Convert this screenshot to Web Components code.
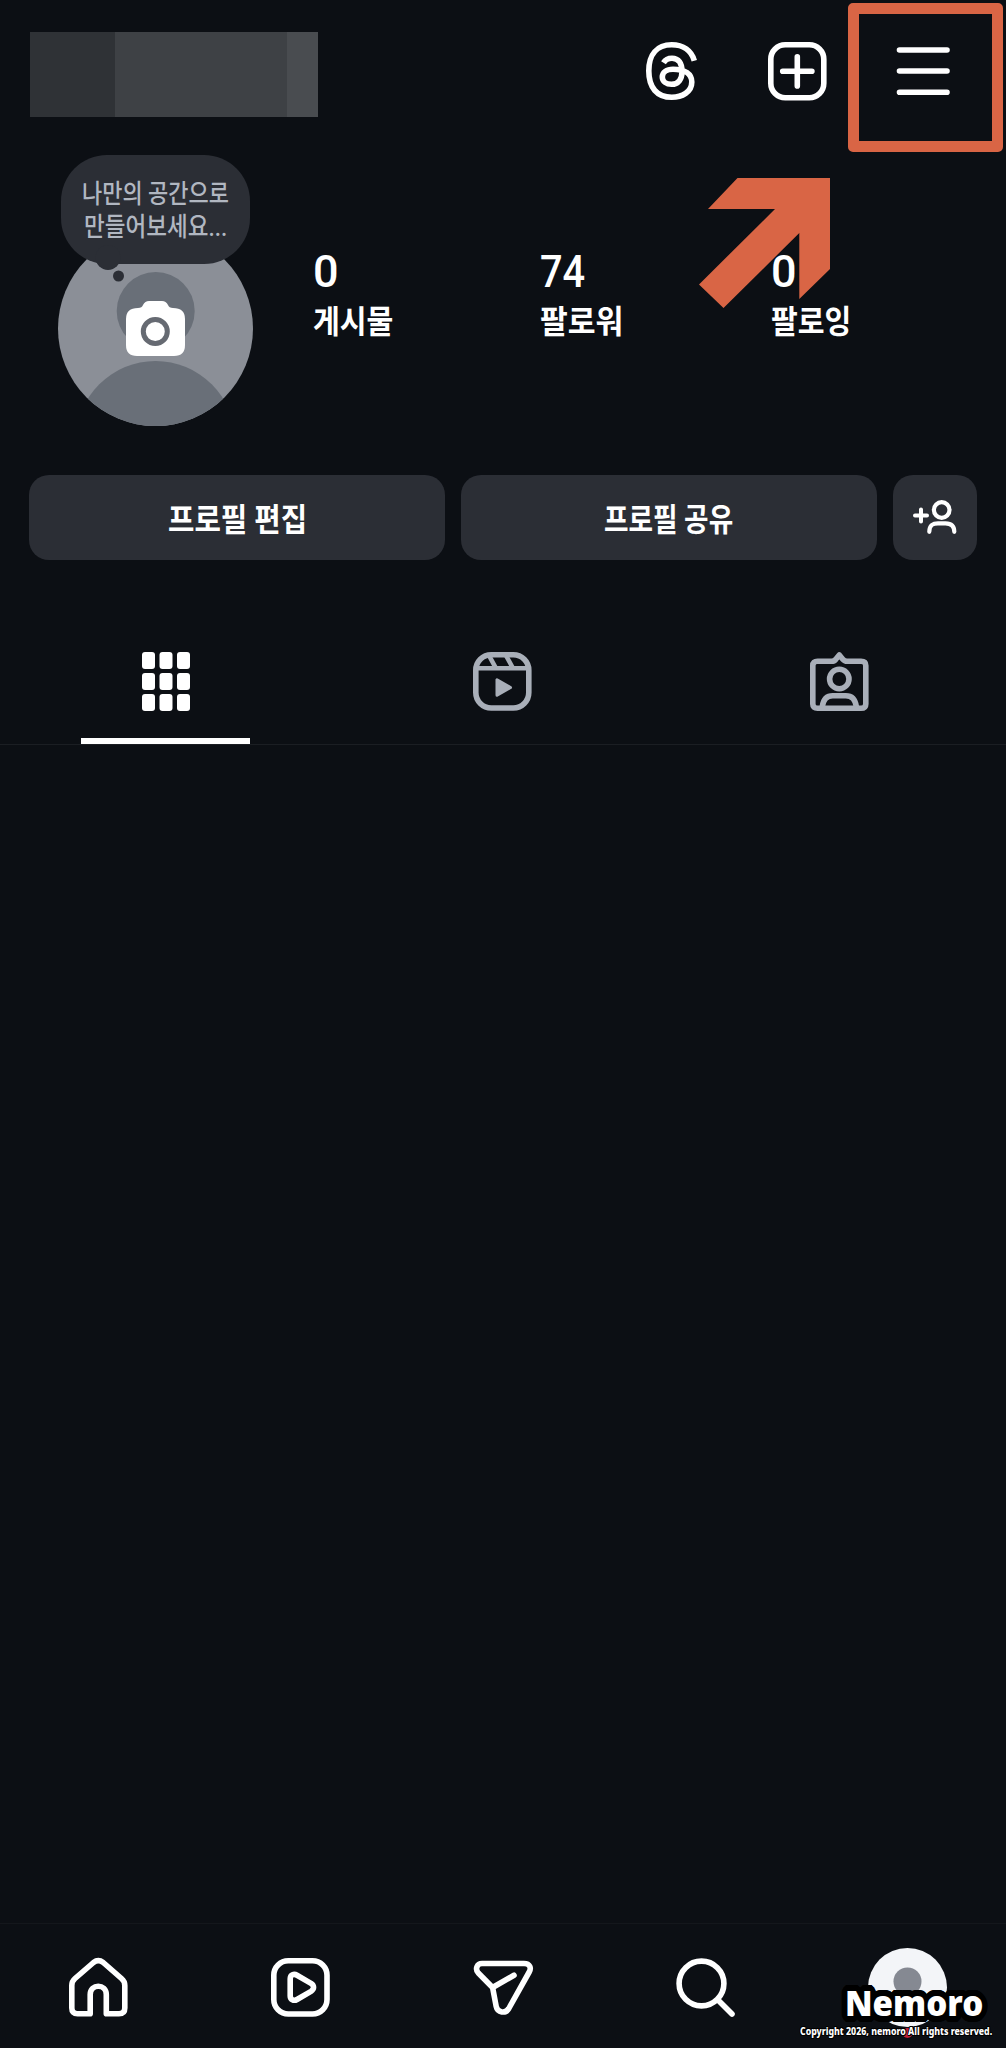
<!DOCTYPE html>
<html lang="ko">
<head>
<meta charset="utf-8">
<title>Profile</title>
<style>
  body {
    margin: 0;
    background: #0c0f14;
    color: #fff;
    font-family: Roboto, "Noto Sans CJK KR", sans-serif;
  }
</style>
</head>
<body>
<profile-page></profile-page>

<script>
const ICONS = {
  threads: `<path stroke-linecap="butt" d="M52.3 18.7C49.5 9 41.5 2.8 29.7 2.8C15 2.8 6.8 12.5 6.8 29S15 55.3 29.7 55.3C40 55.3 49.8 50 49.8 40C49.8 32 43 27.2 31 27.2C24.5 27.2 20.3 30.5 20.3 35S24.5 42.3 29.5 42.3C36.5 42.3 40 37 40 29.5C40 21 36.5 16.3 30 16.3C26 16.3 23.3 17.8 21.5 20.8"/>`,
  create: `<rect x="2.8" y="2.8" width="53" height="53" rx="14.5"/><path d="M29.3 14.7v29.2M14.7 29.3h29.2"/>`,
  menu: `<path d="M5.5 8h47.5M5.5 29h47.5M5.5 50.2h47.5"/>`,
  grid: `<g fill="currentColor" stroke="none"><rect x="6" y="0" width="13" height="17" rx="3"/><rect x="23.5" y="0" width="13" height="17" rx="3"/><rect x="41" y="0" width="13" height="17" rx="3"/><rect x="6" y="21" width="13" height="17" rx="3"/><rect x="23.5" y="21" width="13" height="17" rx="3"/><rect x="41" y="21" width="13" height="17" rx="3"/><rect x="6" y="42" width="13" height="17" rx="3"/><rect x="23.5" y="42" width="13" height="17" rx="3"/><rect x="41" y="42" width="13" height="17" rx="3"/></g>`,
  clips: `<rect x="2.8" y="2.8" width="53" height="53.2" rx="15.5"/><path stroke-width="4.6" stroke-linecap="butt" d="M3 16.3h53M16 3.5l7 12.8M33 3.5l7 12.8"/><path fill="currentColor" stroke-width="3" d="M24 27.8v15.5l13.5-7.8z"/>`,
  tagged: `<path d="M7.5 9.3H21.5Q24.2 9.3 25.8 7.2L29.3 3L32.8 7.2Q34.5 9.3 37.2 9.3H51Q55.8 9.3 55.8 13.5V52Q55.8 56.3 51 56.3H7.5Q2.8 56.3 2.8 52V13.5Q2.8 9.3 7.5 9.3Z"/><circle cx="29.3" cy="27" r="9.7"/><path stroke-linecap="butt" d="M12.3 54.5C13.3 47 16.8 43.7 22.8 43.7H35.8C41.8 43.7 45.3 47 46.3 54.5"/>`,
  home: `<path d="M2.8 27.5Q2.8 23.3 6 20.5L24.5 4.5Q29.3 .9 34.2 4.5L52.5 20.5Q55.8 23.3 55.8 27.5V50Q55.8 55.8 50 55.8H37.3V36.5C37.3 25.4 21.2 25.4 21.2 36.5V55.8H8.5Q2.8 55.8 2.8 50Z"/>`,
  reels: `<rect x="2.8" y="2.8" width="53.2" height="53.2" rx="14.5"/><path d="M19.2 21C19.2 16.6 23 15.5 26 17.2L40 25.3C43.4 27.5 43.4 31.2 40 33.3L26 41.5C22.7 43.4 19.2 41.5 19.2 38Z"/>`,
  send: `<path d="M8 5.5H50C56 5.5 57.5 10 55.2 14L34.8 50.5C31.5 56 23.5 54.8 22.2 48.5L18.6 29.5L4.3 15C.8 11 3 5.5 8 5.5ZM18.6 29.5L40 17.3"/>`,
  search: `<circle cx="25.5" cy="25.5" r="22.4"/><path d="M42 42L56 56"/>`,
  addUser: `<path stroke-width="4" d="M12 14.5v12M6 20.5h12"/><circle cx="32.7" cy="15" r="7.8" stroke-width="4.2"/><path stroke-width="4.2" d="M20.3 36.8C20.3 30 24 28.3 29 28.3H36.5C41.5 28.3 45.3 30.5 45.3 36.8"/>`
};

class UiIcon extends HTMLElement {
  constructor() {
    super();
    this.attachShadow({ mode: "open" });
  }

  connectedCallback() {
    this.shadowRoot.innerHTML = `
      <style>
        :host {
          display: block;
          width: 59px;
          height: 59px;
          flex: none;
        }

        svg {
          display: block;
          overflow: visible;
          fill: none;
          stroke: currentColor;
          stroke-linecap: round;
          stroke-linejoin: round;
        }
      </style>
      <svg width="59" height="59" viewBox="0 0 59 59" stroke-width="5.6">${ICONS[this.getAttribute("name")]}</svg>
    `;
  }
}

// one line of text squeezed or stretched to the given width
class FitText extends HTMLElement {
  constructor() {
    super();
    this.attachShadow({ mode: "open" });
    this.shadowRoot.innerHTML = `
      <style>
        :host {
          display: block;
          white-space: nowrap;
        }

        span {
          display: inline-block;
          transform-origin: left center;
        }
      </style>
      <span><slot></slot></span>
    `;
  }

  connectedCallback() {
    const width = Number(this.getAttribute("width"));
    const span = this.shadowRoot.querySelector("span");
    this.style.width = width + "px";
    span.style.transform = `scaleX(${width / span.offsetWidth})`;
  }
}

class TopBar extends HTMLElement {
  constructor() {
    super();
    this.attachShadow({ mode: "open" });
    this.shadowRoot.innerHTML = `
      <style>
        :host {
          display: flex;
          align-items: center;
          box-sizing: border-box;
          height: 155px;
          padding: 0 53px 13px 30px;
        }

        .name {
          width: 288px;
          height: 85px;
          margin: 7px auto 0 0;
          background: linear-gradient(to right, #2f3236 85px, #3e4145 85px 257px, #494c50 257px);
        }

        nav {
          display: flex;
          gap: 67px;
        }

        .menu {
          position: relative;
        }

        /* highlight frame over the menu button */
        .menu::after {
          content: "";
          position: absolute;
          box-sizing: border-box;
          left: -46px;
          top: -39px;
          width: 155px;
          height: 149px;
          border: 11px solid #d96545;
          border-radius: 5px;
        }
      </style>
      <div class="name"></div>
      <nav>
        <ui-icon name="threads"></ui-icon>
        <ui-icon name="create"></ui-icon>
        <div class="menu"><ui-icon name="menu"></ui-icon></div>
      </nav>
    `;
  }
}

class ProfileAvatar extends HTMLElement {
  constructor() {
    super();
    this.attachShadow({ mode: "open" });
    this.shadowRoot.innerHTML = `
      <style>
        :host {
          display: block;
          position: relative;
          width: 195px;
          height: 195px;
        }

        svg {
          display: block;
        }

        .note {
          position: absolute;
          left: 3px;
          top: -76px;
          width: 189px;
          height: 109px;
          box-sizing: border-box;
          padding-top: 23px;
          border-radius: 46px;
          background: #2b2e35;
          color: #b1b7c1;
          font-size: 26px;
          font-weight: 500;
          line-height: 33px;
          display: flex;
          flex-direction: column;
          align-items: center;
        }

        .tail {
          position: absolute;
          left: 34px;
          top: 90px;
        }

        fit-text {
          position: relative;
        }
      </style>
      <svg width="195" height="195" viewBox="0 0 195 195">
        <clipPath id="round"><circle cx="97.5" cy="97.5" r="97.5"/></clipPath>
        <g clip-path="url(#round)">
          <rect width="195" height="195" fill="#8b8f97"/>
          <circle cx="97.7" cy="80" r="39" fill="#696f78"/>
          <circle cx="97.5" cy="209.5" r="79.5" fill="#696f78"/>
        </g>
        <path fill="#fff" d="M80 77Q84 77 85 74Q87 70 91 70H104Q108 70 110 74Q111 77 115 77Q127 77 127 88V114Q127 125 116 125H79Q68 125 68 114V88Q68 77 80 77Z"/>
        <circle cx="97.3" cy="100.5" r="12" fill="none" stroke="#666a72" stroke-width="5"/>
      </svg>
      <div class="note">
        <svg class="tail" width="40" height="40" fill="#2b2e35"><circle cx="13" cy="12.5" r="12.5"/><circle cx="23.5" cy="31" r="5.5"/></svg>
        <fit-text width="147">나만의 공간으로</fit-text>
        <fit-text width="143">만들어보세요...</fit-text>
      </div>
    `;
  }
}

class ProfileStat extends HTMLElement {
  constructor() {
    super();
    this.attachShadow({ mode: "open" });
    this.shadowRoot.innerHTML = `
      <style>
        :host {
          display: block;
        }

        .count {
          font-size: 45px;
          font-weight: 500;
          line-height: 50px;
          height: 50px;
        }

        .label {
          font-size: 32px;
          font-weight: 700;
          line-height: 50px;
        }
      </style>
      <div class="count"><slot name="count"></slot></div>
      <div class="label"><slot></slot></div>
    `;
  }
}

class ProfileSummary extends HTMLElement {
  constructor() {
    super();
    this.attachShadow({ mode: "open" });
    this.shadowRoot.innerHTML = `
      <style>
        :host {
          display: grid;
          grid-template-columns: 255px 227px 231px 1fr;
          position: relative;
          height: 244px;
          padding: 76px 0 0 58px;
        }

        profile-stat {
          margin-top: 16px;
          z-index: 1;
        }

        .arrow {
          position: absolute;
          left: 699px;
          top: 23px;
        }
      </style>
      <svg class="arrow" width="132" height="131" viewBox="699 178 132 131"><path fill="#d96545" d="M737.5 178H830V269L799.3 299V233L723.5 308L699 284.5L775 209H708Z"/></svg>
      <profile-avatar></profile-avatar>
      <profile-stat><fit-text slot="count" width="26">0</fit-text><fit-text width="80">게시물</fit-text></profile-stat>
      <profile-stat><fit-text slot="count" width="45">74</fit-text><fit-text width="83">팔로워</fit-text></profile-stat>
      <profile-stat><fit-text slot="count" width="26">0</fit-text><fit-text width="80">팔로잉</fit-text></profile-stat>
    `;
  }
}

class ProfileActions extends HTMLElement {
  constructor() {
    super();
    this.attachShadow({ mode: "open" });
    this.shadowRoot.innerHTML = `
      <style>
        :host {
          display: grid;
          grid-template-columns: 1fr 1fr 84px;
          gap: 15.5px;
          padding: 0 29.5px 0 29px;
          height: 84.5px;
        }

        div {
          display: flex;
          align-items: center;
          justify-content: center;
          box-sizing: border-box;
          border-radius: 20px;
          background: #2b2e35;
          font-size: 32px;
          font-weight: 700;
        }

        .add {
          align-items: flex-start;
          padding: 20px 0 0 7px;
        }
      </style>
      <div><fit-text width="139">프로필 편집</fit-text></div>
      <div><fit-text width="129">프로필 공유</fit-text></div>
      <div class="add"><ui-icon name="addUser"></ui-icon></div>
    `;
  }
}

class ProfileTabs extends HTMLElement {
  constructor() {
    super();
    this.attachShadow({ mode: "open" });
    this.shadowRoot.innerHTML = `
      <style>
        :host {
          display: flex;
          justify-content: space-between;
          padding: 92px 82px 0 81px;
          border-bottom: 1px solid #1b1e23;
          color: #a9afb9;
        }

        div {
          display: flex;
          justify-content: center;
          width: 169px;
          height: 86.5px;
          border-bottom: 6px solid transparent;
        }

        .active {
          color: #fff;
          border-color: #fff;
        }
      </style>
      <div class="active"><ui-icon name="grid"></ui-icon></div>
      <div><ui-icon name="clips"></ui-icon></div>
      <div><ui-icon name="tagged"></ui-icon></div>
    `;
  }
}

// ring of hard shadows, gives the text a rounded outline
const outline = (radius, steps = 32) =>
  Array.from({ length: steps }, (_, i) => {
    const a = (i / steps) * Math.PI * 2;
    return `${(Math.cos(a) * radius).toFixed(2)}px ${(Math.sin(a) * radius).toFixed(2)}px 0 #000`;
  }).join(", ");

class BottomNav extends HTMLElement {
  constructor() {
    super();
    this.attachShadow({ mode: "open" });
    this.shadowRoot.innerHTML = `
      <style>
        :host {
          display: flex;
          justify-content: space-between;
          position: relative;
          box-sizing: border-box;
          height: 125px;
          padding: 34px 69px 0;
          border-top: 1px solid #14171c;
        }

        .me {
          width: 79px;
          height: 79px;
          margin: -10px -10px 0;
        }

        .mark {
          position: absolute;
          right: 14px;
          bottom: 10px;
          display: flex;
          flex-direction: column;
          align-items: flex-end;
          font-family: "Noto Sans", sans-serif;
          font-weight: 900;
        }

        .brand {
          margin-right: 9px;
          font-size: 36px;
          line-height: 42px;
          text-shadow: ${outline(6)}, ${outline(3, 16)};
        }

        .copy {
          font-size: 10.5px;
          line-height: 14px;
          font-weight: 800;
          text-shadow: ${outline(1, 8)};
        }
      </style>
      <ui-icon name="home"></ui-icon>
      <ui-icon name="reels"></ui-icon>
      <ui-icon name="send"></ui-icon>
      <ui-icon name="search"></ui-icon>
      <svg class="me" viewBox="0 0 79 79" overflow="visible">
        <circle cx="39.5" cy="39.5" r="39.5" fill="#f3f5f8"/>
        <circle cx="39.5" cy="33.5" r="14" fill="#858992"/>
        <path fill="#858992" d="M20 73Q39.5 50 59 73Q39.5 74 20 73Z"/>
        <circle cx="39.5" cy="85" r="5" fill="#c31f35"/>
      </svg>
      <div class="mark">
        <fit-text class="brand" width="138">Nemoro</fit-text>
        <fit-text class="copy" width="192">Copyright 2026, nemoro All rights reserved.</fit-text>
      </div>
    `;
  }
}

class ProfilePage extends HTMLElement {
  constructor() {
    super();
    this.attachShadow({ mode: "open" });
    this.shadowRoot.innerHTML = `
      <style>
        :host {
          display: flex;
          flex-direction: column;
          width: 1006px;
          height: 2048px;
          overflow: hidden;
        }

        bottom-nav {
          margin-top: auto;
        }
      </style>
      <top-bar></top-bar>
      <profile-summary></profile-summary>
      <profile-actions></profile-actions>
      <profile-tabs></profile-tabs>
      <bottom-nav></bottom-nav>
    `;
  }
}

customElements.define("ui-icon", UiIcon);
customElements.define("fit-text", FitText);
customElements.define("top-bar", TopBar);
customElements.define("profile-avatar", ProfileAvatar);
customElements.define("profile-stat", ProfileStat);
customElements.define("profile-summary", ProfileSummary);
customElements.define("profile-actions", ProfileActions);
customElements.define("profile-tabs", ProfileTabs);
customElements.define("bottom-nav", BottomNav);
customElements.define("profile-page", ProfilePage);
</script>
</body>
</html>
